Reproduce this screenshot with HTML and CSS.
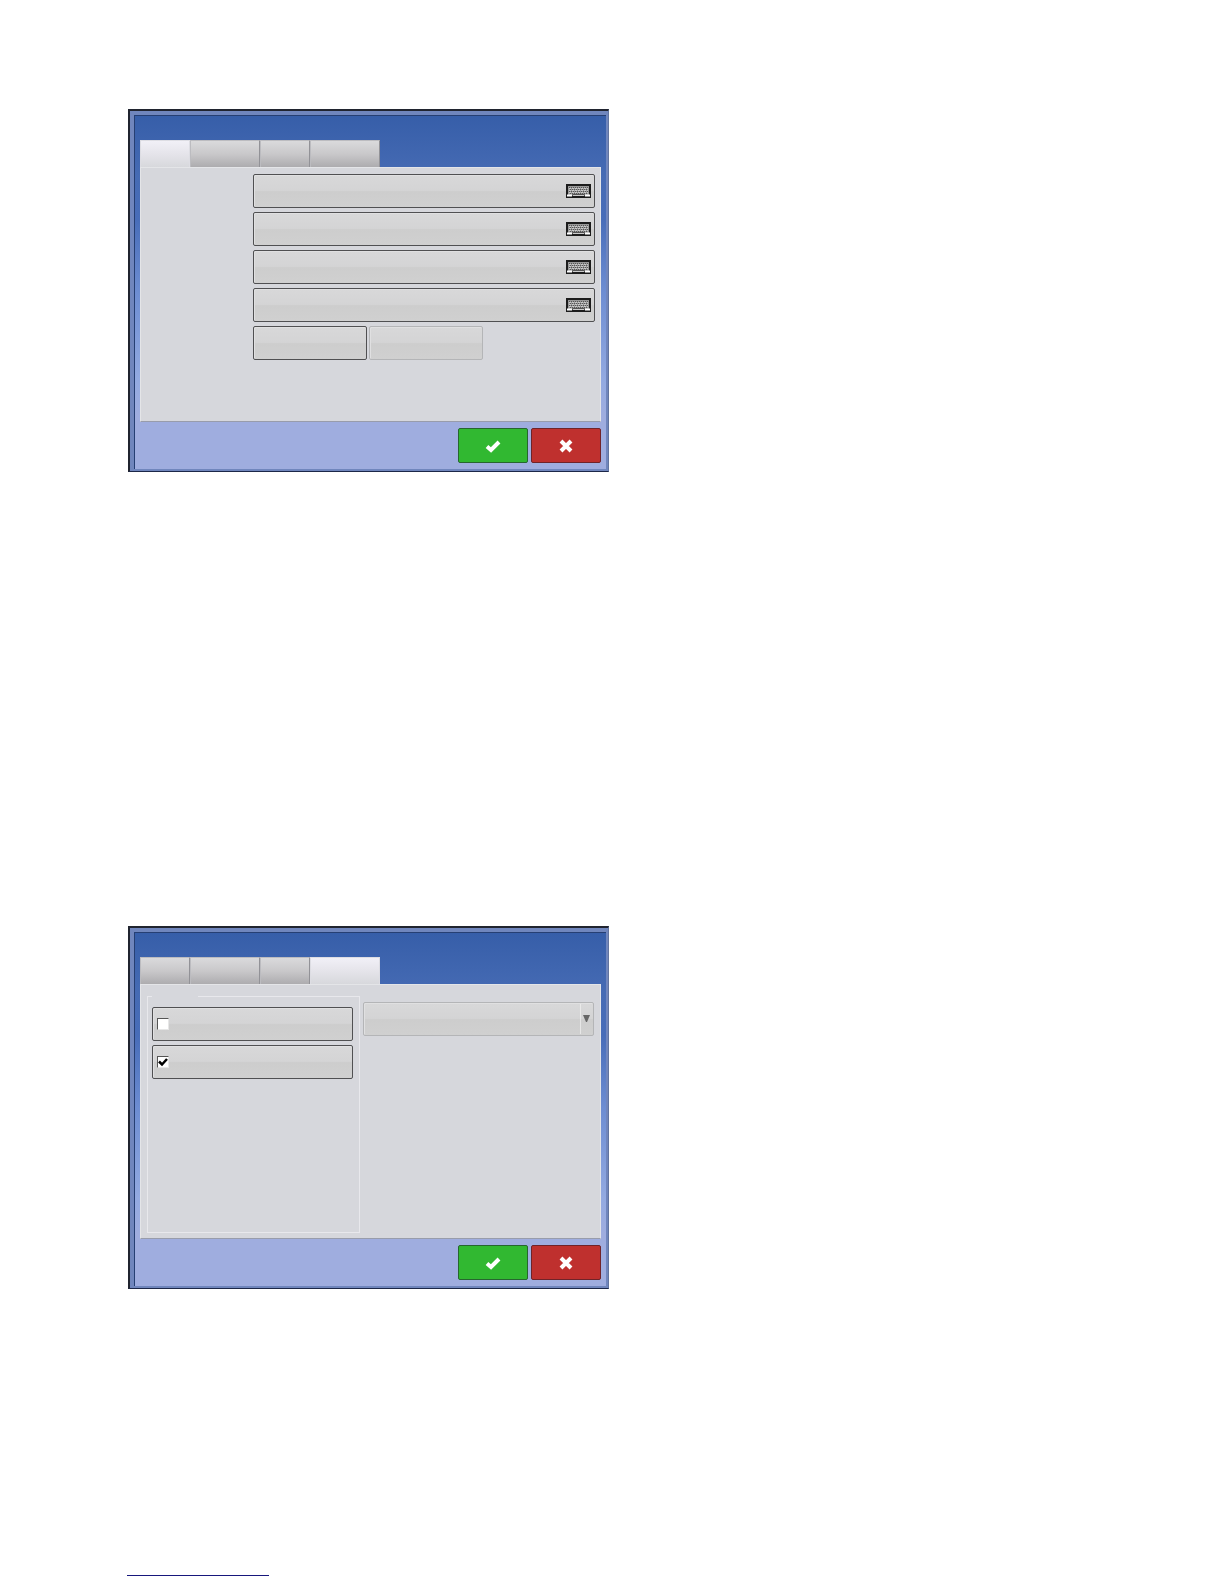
FILE: index.html
```
<!DOCTYPE html>
<html lang="en">
<head>
  <meta charset="UTF-8">
  <meta name="viewport" content="width=device-width, initial-scale=1.0">
  <title>Setup</title>
  <link rel="stylesheet" href="styles.css">
</head>
<body>
  <!-- shared icons -->
  <svg class="sprite" aria-hidden="true">
    <symbol id="keyboard" viewBox="0 0 25 14">
      <rect x="1" y="1" width="23" height="12" fill="#999" stroke="#1c1c1c" stroke-width="2"/>
      <path d="M3 3.5h19M4 5.5h18M3 7.5h19M4 9.5h17" stroke="#555" stroke-dasharray="1 1"/>
      <path d="M3 4.5h19M3 6.5h19M3 8.5h19" stroke="#c8c8c8" stroke-dasharray="2 1"/>
      <path d="M1 11.5h5M19 11.5h5" stroke="#fff" stroke-width="2"/>
      <path d="M6.5 12v-1.5h12V12" fill="#ccc" stroke="#555"/>
    </symbol>
    <symbol id="tick" viewBox="0 0 16 14">
      <path d="M2 7.5L6 11L14 3" fill="none" stroke="#fff" stroke-width="4"/>
    </symbol>
    <symbol id="cross" viewBox="0 0 14 14">
      <path d="M2 2l10 10M12 2L2 12" fill="none" stroke="#fff" stroke-width="4"/>
    </symbol>
  </svg>

  <main>
    <form class="dialog first">
      <div class="tabs" role="tablist">
        <button type="button" class="tab small active" role="tab" aria-label="Tab 1"></button>
        <button type="button" class="tab wide" role="tab" aria-label="Tab 2"></button>
        <button type="button" class="tab small" role="tab" aria-label="Tab 3"></button>
        <button type="button" class="tab wide" role="tab" aria-label="Tab 4"></button>
      </div>
      <div class="panel fields">
        <label class="box field"><input type="text" aria-label="Field 1"><svg class="keyboard"><use href="#keyboard"/></svg></label>
        <label class="box field"><input type="text" aria-label="Field 2"><svg class="keyboard"><use href="#keyboard"/></svg></label>
        <label class="box field"><input type="text" aria-label="Field 3"><svg class="keyboard"><use href="#keyboard"/></svg></label>
        <label class="box field"><input type="text" aria-label="Field 4"><svg class="keyboard"><use href="#keyboard"/></svg></label>
        <div class="row">
          <button type="button" class="box" aria-label="Action 1"></button>
          <button type="button" class="box" aria-label="Action 2" disabled></button>
        </div>
      </div>
      <div class="actions">
        <button type="button" class="ok" aria-label="OK"><svg width="16" height="14"><use href="#tick"/></svg></button>
        <button type="button" class="cancel" aria-label="Cancel"><svg width="14" height="14"><use href="#cross"/></svg></button>
      </div>
    </form>

    <form class="dialog">
      <div class="tabs" role="tablist">
        <button type="button" class="tab small" role="tab" aria-label="Tab 1"></button>
        <button type="button" class="tab wide" role="tab" aria-label="Tab 2"></button>
        <button type="button" class="tab small" role="tab" aria-label="Tab 3"></button>
        <button type="button" class="tab wide active" role="tab" aria-label="Tab 4"></button>
      </div>
      <div class="panel columns">
        <fieldset>
          <legend></legend>
          <label class="box option"><input type="checkbox" aria-label="Option 1"></label>
          <label class="box option"><input type="checkbox" aria-label="Option 2" checked></label>
        </fieldset>
        <div class="box select">
          <select aria-label="Selection" disabled><option></option></select>
          <svg width="8" height="8" viewBox="0 0 8 8"><path d="M0 0h7L4 7H3z" fill="#666"/></svg>
        </div>
      </div>
      <div class="actions">
        <button type="button" class="ok" aria-label="OK"><svg width="16" height="14"><use href="#tick"/></svg></button>
        <button type="button" class="cancel" aria-label="Cancel"><svg width="14" height="14"><use href="#cross"/></svg></button>
      </div>
    </form>
  </main>
  <footer>
    <a class="footer-link" href="#" aria-label="Website"></a>
  </footer>
</body>
</html>
```

FILE: styles.css
```
* {
  margin: 0;
  padding: 0;
  box-sizing: border-box;
  font-family: "Liberation Sans", Arial, sans-serif;
}

body {
  background-color: #fff;
  padding: 109px 127px 0;
}

.sprite {
  position: absolute;
  width: 0;
  height: 0;
}

main {
  padding-left: 1px;
}

/* dialog windows */
.dialog {
  max-width: 481px;
  padding: 29px 7px 8px 10px;
  border: 2px solid #20242f;
  border-right: 1px solid #62749f;
  border-bottom: 1px solid #1c2748;
  box-shadow: inset 0 0 0 2px #7086bd, inset 4px 4px 0 0 #7086bd, inset 5px 5px 0 0 #263f73;
  background: linear-gradient(#355da8, #466bb4 18%, #486db9 30%, #6d8dd2 50%, #93aae1 75%, #9faddf 85%);
}

.first {
  margin-bottom: 454px;
}

.tabs {
  display: flex;
}

.tab {
  height: 27px;
  border: 1px solid #bcbcc0;
  border-right-color: #929297;
  border-bottom: none;
  background: linear-gradient(#dadadc, #c9c8ca 50%, #adacaf);
}

.tab.small {
  width: 50px;
}

.tab.wide {
  width: 70px;
}

.tab.active {
  border-color: #dddde3;
  background: linear-gradient(#f1f0f7, #e5e4ea 50%, #d7d8dc);
}

.panel {
  min-height: 255px;
  border: 1px solid #e4e5e8;
  border-bottom-color: #989cab;
  background-color: #d6d7dc;
}

/* grey boxes used by the fields and buttons */
.box {
  display: flex;
  align-items: center;
  height: 34px;
  border: 1px solid #505052;
  border-radius: 2px;
  background: linear-gradient(#d8d8d9, #d4d4d5 48%, #cdcdcd 52%, #d0d0d0);
  box-shadow: inset 1px 1px 0 #e0e0e1;
}

.box:disabled,
.select {
  border-color: #b4b5b7;
}

.fields {
  display: flex;
  flex-direction: column;
  gap: 4px;
  padding: 6px 5px 0 112px;
}

.field {
  padding-right: 3px;
}

.field input {
  flex: 1;
  min-width: 0;
  height: 100%;
  padding-left: 8px;
  border: none;
  background: transparent;
}

.keyboard {
  width: 25px;
  height: 14px;
}

.row {
  display: flex;
  gap: 2px;
}

.row .box {
  width: 114px;
}

.columns {
  display: grid;
  grid-template-columns: 213px 1fr;
  gap: 3px;
  padding: 11px 6px 5px 6px;
}

fieldset {
  min-width: 0;
  padding: 10px 6px 0 4px;
  border: 1px solid #e8e8ec;
}

legend {
  width: 46px;
  height: 1px;
}

.option {
  margin-bottom: 4px;
  padding-left: 4px;
}

.option input {
  appearance: none;
  width: 12px;
  height: 12px;
  border: 1px solid #e6e6e6;
  border-top-color: #555;
  border-left-color: #555;
  background-color: #fff;
}

.option input:checked {
  background-image: url("data:image/svg+xml,%3Csvg xmlns='http://www.w3.org/2000/svg' viewBox='0 0 10 10'%3E%3Cpath d='M1 4.5L4 7.5L9 2' fill='none' stroke='%23000' stroke-width='2.5'/%3E%3C/svg%3E");
}

.select {
  margin-top: 6px;
  padding-right: 2px;
}

.select select {
  appearance: none;
  flex: 1;
  min-width: 0;
  height: 30px;
  margin-right: 2px;
  border: none;
  border-right: 1px solid #f1f1f1;
  background: transparent;
}

.actions {
  display: flex;
  justify-content: flex-end;
  gap: 3px;
  margin-top: 6px;
}

.actions button {
  display: flex;
  align-items: center;
  justify-content: center;
  width: 70px;
  height: 35px;
  border-radius: 2px;
}

.ok {
  border: 1px solid #26662f;
  background-color: #31b831;
}

.cancel {
  border: 1px solid #702329;
  background-color: #bf302e;
}

footer {
  display: flex;
  margin-top: 286px;
  padding-bottom: 8px;
}

.footer-link {
  width: 142px;
  border-bottom: 1px solid #17177c;
}
```
